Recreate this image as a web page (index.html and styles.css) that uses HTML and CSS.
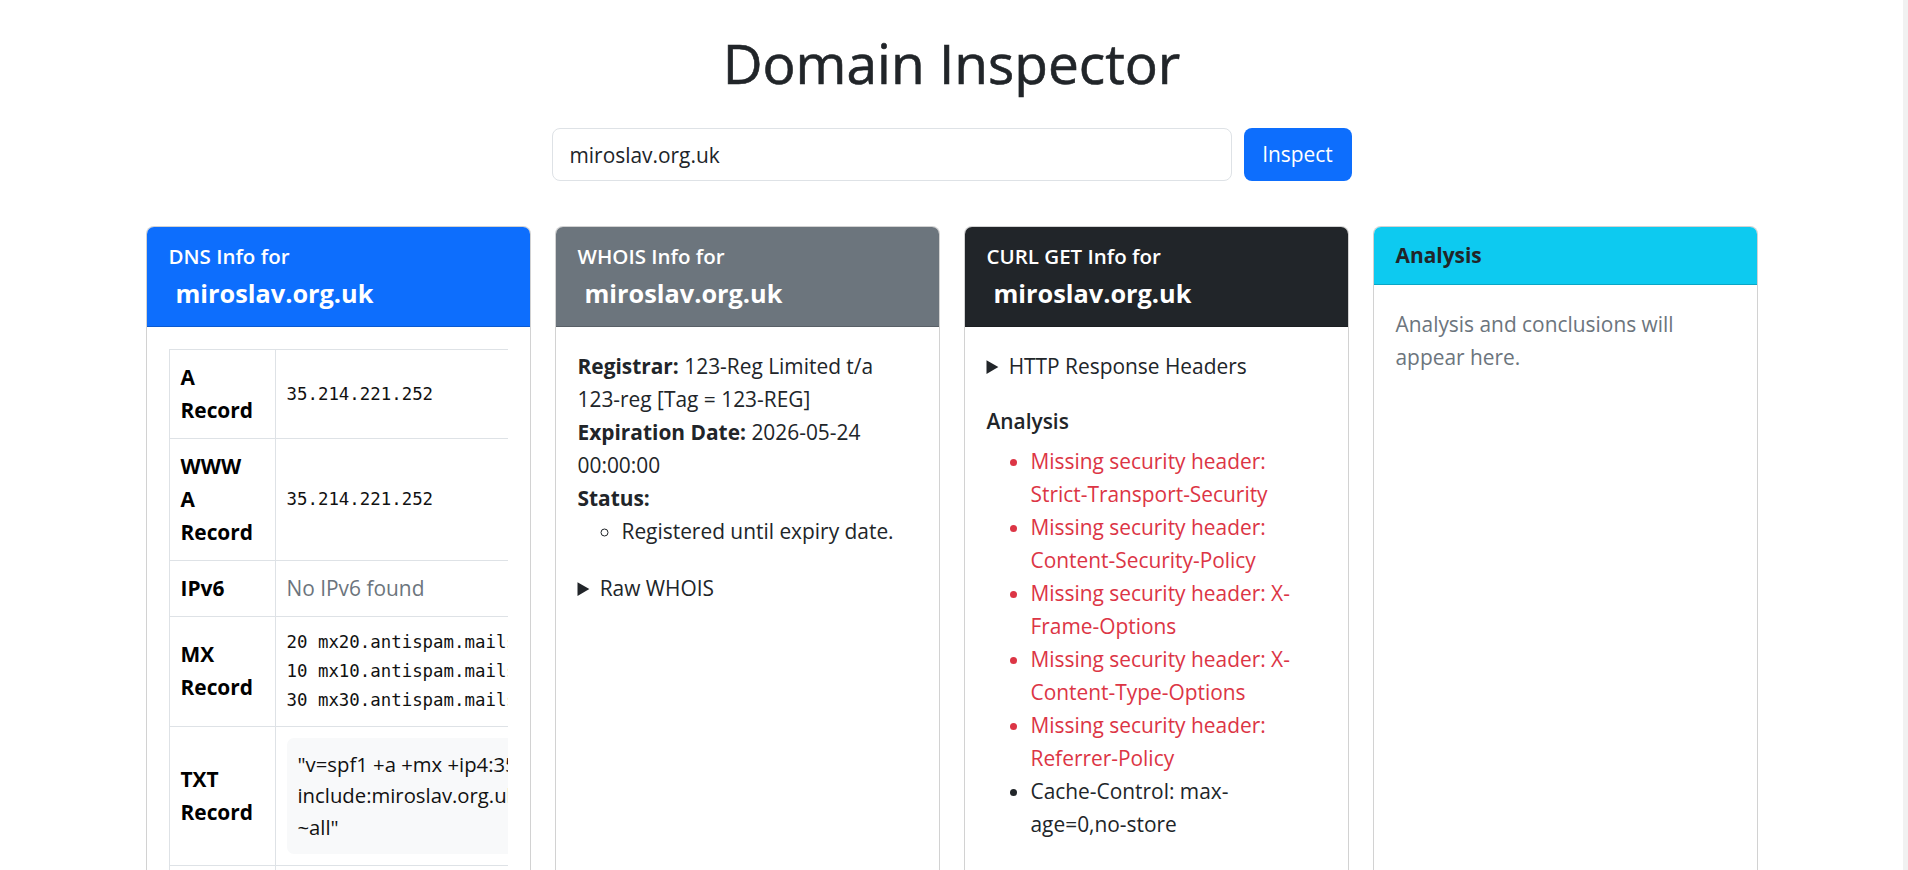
FILE: index.html
```html
<!DOCTYPE html>
<html lang="en">
<head>
<meta charset="utf-8">
<title>Domain Inspector</title>
<link rel="stylesheet" href="styles.css">
</head>
<body>
<div class="page">
  <h1 class="title">Domain Inspector</h1>
  <form class="search">
    <input class="search-input" type="text" value="miroslav.org.uk">
    <button class="btn" type="button">Inspect</button>
  </form>

  <div class="cards">
    <div class="card">
      <div class="card-header hdr-primary">
        <div class="hdr-label">DNS Info for</div>
        <h5 class="hdr-domain">miroslav.org.uk</h5>
      </div>
      <div class="card-body">
        <div class="table-wrap">
          <table class="dns-table">
            <tr><th><div class="lbl">A<br>Record</div></th><td><pre class="mono">35.214.221.252</pre></td></tr>
            <tr><th><div class="lbl">WWW<br>A<br>Record</div></th><td><pre class="mono">35.214.221.252</pre></td></tr>
            <tr><th><div class="lbl">IPv6</div></th><td class="muted">No IPv6 found</td></tr>
            <tr><th><div class="lbl">MX<br>Record</div></th><td><pre class="mono">20 mx20.antispam.mailspamprotection.com.
10 mx10.antispam.mailspamprotection.com.
30 mx30.antispam.mailspamprotection.com.</pre></td></tr>
            <tr><th><div class="lbl">TXT<br>Record</div></th><td><div class="txt-block">"v=spf1 +a +mx +ip4:35.214.221.252 include:miroslav.org.uk.spf.auto.dnssmarthost.net ~all"</div></td></tr>
            <tr><th><div class="lbl">NS<br>Record</div></th><td><pre class="mono">ns1.siteground.net.
ns2.siteground.net.</pre></td></tr>
          </table>
        </div>
      </div>
    </div>

    <div class="card">
      <div class="card-header hdr-secondary">
        <div class="hdr-label">WHOIS Info for</div>
        <h5 class="hdr-domain">miroslav.org.uk</h5>
      </div>
      <div class="card-body text-body">
        <div><strong>Registrar:</strong> 123-Reg Limited t/a <span class="nowrap">123-reg</span> [Tag = 123-REG]</div>
        <div><strong>Expiration Date:</strong> 2026-05-24 00:00:00</div>
        <div><strong>Status:</strong></div>
        <ul class="status-list"><li>Registered until expiry date.</li></ul>
        <details><summary>Raw WHOIS</summary><pre class="mono">Domain name: miroslav.org.uk</pre></details>
      </div>
    </div>

    <div class="card">
      <div class="card-header hdr-dark">
        <div class="hdr-label">CURL GET Info for</div>
        <h5 class="hdr-domain">miroslav.org.uk</h5>
      </div>
      <div class="card-body text-body">
        <details class="headers"><summary>HTTP Response Headers</summary><pre class="mono">HTTP/2 200</pre></details>
        <h6 class="sub">Analysis</h6>
        <ul class="findings">
          <li class="danger">Missing security header: <span class="nowrap">Strict-Transport-Security</span></li>
          <li class="danger">Missing security header: <span class="nowrap">Content-Security-Policy</span></li>
          <li class="danger">Missing security header: X-Frame-Options</li>
          <li class="danger">Missing security header: X-Content-Type-Options</li>
          <li class="danger">Missing security header: <span class="nowrap">Referrer-Policy</span></li>
          <li>Cache-Control: max-<span class="nowrap">age=0,no-store</span></li>
        </ul>
      </div>
    </div>

    <div class="card">
      <div class="card-header hdr-info">
        <strong>Analysis</strong>
      </div>
      <div class="card-body text-body">
        <p class="muted note">Analysis and conclusions will appear here.</p>
      </div>
    </div>
  </div>
</div>
</body>
</html>
```

FILE: styles.css
```css
* { box-sizing: border-box; }

html { border-right: 5px solid #f1f1f1; }

body {
  margin: 0;
  font-family: "Open Sans", "Noto Sans", sans-serif;
  font-size: 20.9px;
  line-height: 33px;
  color: #212529;
  background: #fff;
}

.page {
  width: 1612px;
  margin: 0 auto;
  padding-top: 30px;
}

.title {
  margin: 0;
  text-align: center;
  font-size: 55px;
  line-height: 66px;
  font-weight: 400;
  color: #212529;
  -webkit-text-stroke: 0.6px #212529;
}

.search {
  display: flex;
  gap: 12px;
  width: 800px;
  margin: 32px auto 0;
}

.search-input {
  flex: 1;
  height: 53px;
  padding: 0 17px;
  border: 1px solid #dee2e6;
  border-radius: 8px;
  font: inherit;
  color: #212529;
  background: #fff;
}

.btn {
  width: 108px;
  height: 53px;
  padding: 0;
  border: 0;
  border-radius: 8px;
  background: #0d6efd;
  color: #fff;
  font: inherit;
}

.cards {
  display: grid;
  grid-template-columns: repeat(4, 1fr);
  gap: 24px;
  margin-top: 45px;
  align-items: stretch;
}

.card {
  border: 1px solid rgba(0, 0, 0, .175);
  border-radius: 8px;
  overflow: hidden;
  background: #fff;
  min-height: 900px;
}

.card-header {
  padding: 13px 22px 11px;
  border-bottom: 1px solid rgba(0, 0, 0, .175);
  color: #fff;
}

.hdr-primary { background: #0d6efd; }
.hdr-secondary { background: #6c757d; }
.hdr-dark { background: #212529; }
.hdr-info {
  background: #0dcaf0;
  color: #212529;
  padding: 12px 22px;
}

.hdr-label {
  font-weight: 600;
  font-size: 20.5px;
  line-height: 33px;
}

.hdr-domain {
  margin: 4px 0 5px;
  padding-left: 7px;
  font-size: 25.3px;
  line-height: 33px;
  font-weight: 700;
}

.card-body {
  padding: 22px;
}

.text-body {
  padding-top: 23px;
}

.table-wrap {
  overflow-x: auto;
}

.dns-table {
  width: 100%;
  border-collapse: collapse;
}

.dns-table th,
.dns-table td {
  border: 1px solid #dee2e6;
  padding: 11px;
  vertical-align: middle;
  text-align: left;
}

.dns-table th {
  font-weight: 700;
  color: #000;
}

.lbl {
  width: 83px;
}

.mono {
  margin: 0;
  font-family: "DejaVu Sans Mono", "Liberation Mono", monospace;
  font-size: 17.4px;
  line-height: 28.9px;
  white-space: pre;
  color: #111;
}

.muted { color: #6c757d; }

.txt-block {
  background: #f8f9fa;
  border-radius: 7px;
  padding: 11px;
  font-size: 20.3px;
  line-height: 31.5px;
  color: #111;
}

.nowrap { white-space: nowrap; }

.status-list {
  margin: 0 0 24px;
  padding-left: 44px;
  list-style-type: circle;
}

details pre.mono { display: block; }

.headers {
  margin-bottom: 24px;
}

.sub {
  margin: 0 0 11px;
  padding-top: 1px;
  font-size: 20.9px;
  line-height: 26.4px;
  font-weight: 600;
}

.findings {
  margin: 0;
  padding-left: 44px;
}

.danger { color: #dc3545; }

.note { margin: 0; }
```
